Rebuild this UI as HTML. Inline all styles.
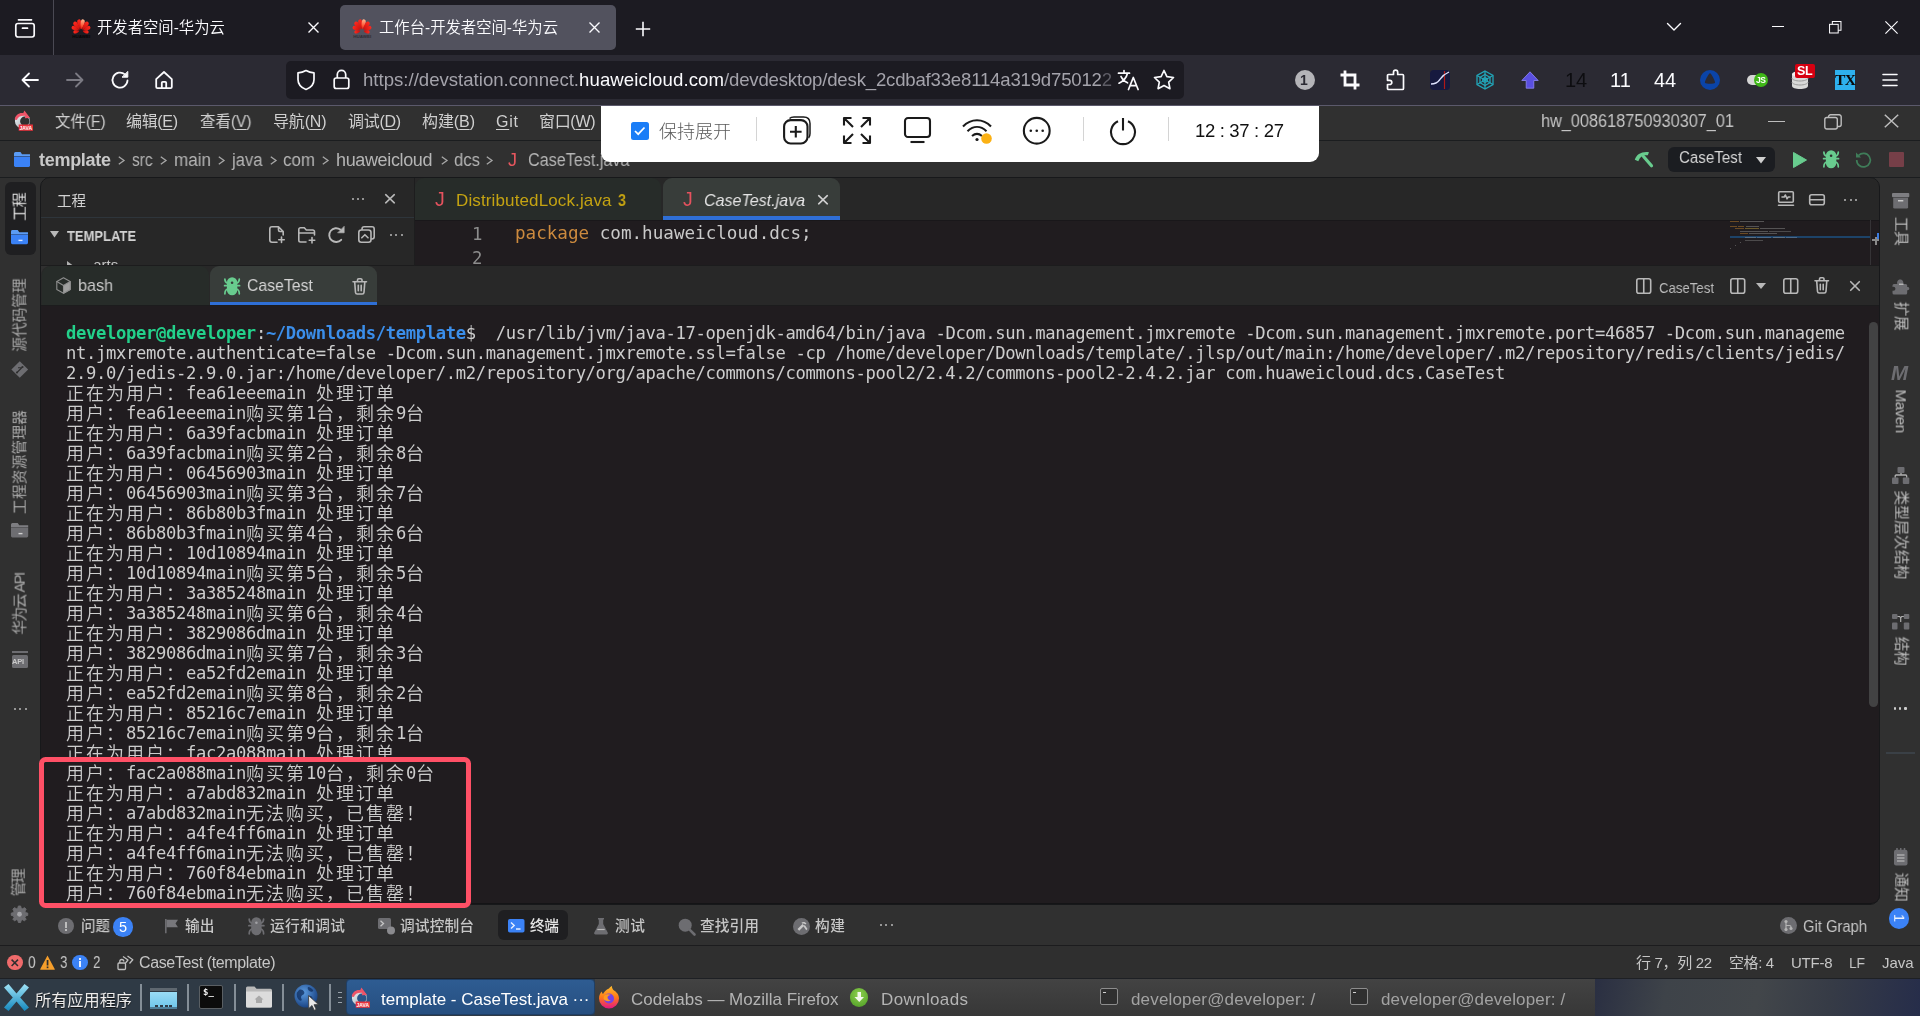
<!DOCTYPE html>
<html lang="zh-CN">
<head>
<meta charset="utf-8">
<title>工作台-开发者空间-华为云</title>
<style>
*{box-sizing:border-box;margin:0;padding:0}
html,body{width:1920px;height:1020px;overflow:hidden;background:#fff}
body{position:relative;font-family:"Liberation Sans","Noto Sans CJK SC",sans-serif;color:#d4d4d4}
.a{position:absolute}
.t{position:absolute;white-space:nowrap;line-height:1}
svg{position:absolute;overflow:visible}
#tabbar{left:0;top:0;width:1920px;height:55px;background:#1c1b22}
#navbar{left:0;top:55px;width:1920px;height:50px;background:#2b2a33}
#urlbar{left:286px;top:61px;width:898px;height:38px;background:#1c1b22;border-radius:5px}
.ftab{font-size:15.35px;color:#fbfbfe;top:20px;font-weight:350}
.term{font-family:"DejaVu Sans Mono","WenQuanYi Zen Hei Mono","WenQuanYi Zen Hei",monospace;font-size:17.2px;letter-spacing:-0.355px;line-height:20px;color:#cdcdcd;white-space:pre}
u{text-decoration:underline;text-underline-offset:2px;text-decoration-thickness:1px}
.term .w{display:inline-block;height:20px;line-height:20px;vertical-align:top;letter-spacing:2px;font-size:18px;font-family:"DejaVu Sans Mono","Noto Sans CJK SC","WenQuanYi Zen Hei",monospace;font-weight:350;position:relative;top:.6px}
.term b{font-weight:bold}
.t,.term{will-change:transform}
</style>
</head>
<body>
<!-- ======= Firefox tab bar ======= -->
<div id="tabbar" class="a"></div>
<div id="navbar" class="a"></div>
<div id="urlbar" class="a"></div>
<!-- firefox view icon -->
<svg class="a" style="left:14px;top:17px" width="22" height="22" viewBox="0 0 22 22" fill="none" stroke="#fbfbfe" stroke-width="1.7" stroke-linecap="round" stroke-linejoin="round"><path d="M4.5 2.8h13"/><rect x="1.8" y="6.5" width="18.4" height="13.5" rx="2.2"/><path d="M8.5 11.2h5"/></svg>
<div class="a" style="left:53px;top:0;width:1px;height:55px;background:#4a4953"></div>
<!-- tab 1 -->
<svg class="a" style="left:71px;top:17.5px" width="20" height="21" viewBox="0 0 20 21"><defs><linearGradient id="hwa" x1="0" y1="0" x2="0" y2="1"><stop offset="0" stop-color="#ff2a1f"/><stop offset="1" stop-color="#c8100c"/></linearGradient><linearGradient id="hpa" x1="0" y1="0" x2="0" y2="1"><stop offset="0" stop-color="#ffb892"/><stop offset=".6" stop-color="#ff5a38"/><stop offset="1" stop-color="#d8140e"/></linearGradient></defs><path transform="translate(10 13.200) rotate(-11)" d="M0 -1.8C-1.9 -5.4 -3.3 -12.2 0 -12.0C3.3 -12.2 1.9 -5.4 0 -1.8Z" fill="url(#hwa)"/><path transform="translate(10 13.200) rotate(11)" d="M0 -1.8C-1.9 -5.4 -3.3 -12.2 0 -12.0C3.3 -12.2 1.9 -5.4 0 -1.8Z" fill="url(#hpa)"/><path transform="translate(10 13.200) rotate(-37)" d="M0 -1.8C-2.0 -5.2 -3.4 -11.8 0 -11.6C3.4 -11.8 2.0 -5.2 0 -1.8Z" fill="url(#hwa)"/><path transform="translate(10 13.200) rotate(37)" d="M0 -1.8C-2.0 -5.2 -3.4 -11.8 0 -11.6C3.4 -11.8 2.0 -5.2 0 -1.8Z" fill="url(#hwa)"/><path transform="translate(10 13.200) rotate(-65)" d="M0 -1.8C-1.8 -4.7 -3.1 -10.4 0 -10.2C3.1 -10.4 1.8 -4.7 0 -1.8Z" fill="url(#hwa)"/><path transform="translate(10 13.200) rotate(65)" d="M0 -1.8C-1.8 -4.7 -3.1 -10.4 0 -10.2C3.1 -10.4 1.8 -4.7 0 -1.8Z" fill="url(#hwa)"/><path transform="translate(10 13.200) rotate(-97)" d="M0 -1.8C-1.5 -3.8 -2.6 -7.8 0 -7.6C2.6 -7.8 1.5 -3.8 0 -1.8Z" fill="url(#hwa)"/><path transform="translate(10 13.200) rotate(97)" d="M0 -1.8C-1.5 -3.8 -2.6 -7.8 0 -7.6C2.6 -7.8 1.5 -3.8 0 -1.8Z" fill="url(#hwa)"/><text x="10.200" y="19.800" text-anchor="middle" font-size="4" font-weight="bold" fill="#050505" font-family="Liberation Sans, sans-serif" textLength="18" lengthAdjust="spacingAndGlyphs">HUAWEI</text></svg>
<div class="t ftab" style="left:96.500px">开发者空间-华为云</div>
<svg class="a" style="left:307px;top:21px" width="13" height="13" viewBox="0 0 13 13" stroke="#fbfbfe" stroke-width="1.400" fill="none"><path d="M1.500 1.500l10 10M11.500 1.500l-10 10"/></svg>
<!-- tab 2 active -->
<div class="a" style="left:340px;top:5px;width:276px;height:45px;background:#52525e;border-radius:5px"></div>
<svg class="a" style="left:352px;top:17.5px" width="20" height="21" viewBox="0 0 20 21"><defs><linearGradient id="hwb" x1="0" y1="0" x2="0" y2="1"><stop offset="0" stop-color="#ff2a1f"/><stop offset="1" stop-color="#c8100c"/></linearGradient><linearGradient id="hpb" x1="0" y1="0" x2="0" y2="1"><stop offset="0" stop-color="#ffb892"/><stop offset=".6" stop-color="#ff5a38"/><stop offset="1" stop-color="#d8140e"/></linearGradient></defs><path transform="translate(10 13.200) rotate(-11)" d="M0 -1.8C-1.9 -5.4 -3.3 -12.2 0 -12.0C3.3 -12.2 1.9 -5.4 0 -1.8Z" fill="url(#hwb)"/><path transform="translate(10 13.200) rotate(11)" d="M0 -1.8C-1.9 -5.4 -3.3 -12.2 0 -12.0C3.3 -12.2 1.9 -5.4 0 -1.8Z" fill="url(#hpb)"/><path transform="translate(10 13.200) rotate(-37)" d="M0 -1.8C-2.0 -5.2 -3.4 -11.8 0 -11.6C3.4 -11.8 2.0 -5.2 0 -1.8Z" fill="url(#hwb)"/><path transform="translate(10 13.200) rotate(37)" d="M0 -1.8C-2.0 -5.2 -3.4 -11.8 0 -11.6C3.4 -11.8 2.0 -5.2 0 -1.8Z" fill="url(#hwb)"/><path transform="translate(10 13.200) rotate(-65)" d="M0 -1.8C-1.8 -4.7 -3.1 -10.4 0 -10.2C3.1 -10.4 1.8 -4.7 0 -1.8Z" fill="url(#hwb)"/><path transform="translate(10 13.200) rotate(65)" d="M0 -1.8C-1.8 -4.7 -3.1 -10.4 0 -10.2C3.1 -10.4 1.8 -4.7 0 -1.8Z" fill="url(#hwb)"/><path transform="translate(10 13.200) rotate(-97)" d="M0 -1.8C-1.5 -3.8 -2.6 -7.8 0 -7.6C2.6 -7.8 1.5 -3.8 0 -1.8Z" fill="url(#hwb)"/><path transform="translate(10 13.200) rotate(97)" d="M0 -1.8C-1.5 -3.8 -2.6 -7.8 0 -7.6C2.6 -7.8 1.5 -3.8 0 -1.8Z" fill="url(#hwb)"/><text x="10.200" y="19.800" text-anchor="middle" font-size="4" font-weight="bold" fill="#2e2d36" font-family="Liberation Sans, sans-serif" textLength="18" lengthAdjust="spacingAndGlyphs">HUAWEI</text></svg>
<div class="t ftab" style="left:378.500px">工作台-开发者空间-华为云</div>
<svg class="a" style="left:588px;top:21px" width="13" height="13" viewBox="0 0 13 13" stroke="#fbfbfe" stroke-width="1.400" fill="none"><path d="M1.500 1.500l10 10M11.500 1.500l-10 10"/></svg>
<!-- new tab -->
<svg class="a" style="left:635px;top:21px" width="16" height="16" viewBox="0 0 16 16" stroke="#fbfbfe" stroke-width="1.600" fill="none"><path d="M8 .8v14.400M.8 8h14.400"/></svg>
<!-- window controls -->
<svg class="a" style="left:1666px;top:22px" width="16" height="10" viewBox="0 0 16 10" stroke="#fbfbfe" stroke-width="1.400" fill="none" stroke-linecap="round" stroke-linejoin="round"><path d="M1.500 1.500L8 8l6.500-6.500"/></svg>
<div class="a" style="left:1772px;top:26px;width:12px;height:1px;background:#fbfbfe"></div>
<svg class="a" style="left:1828.700px;top:20.800px" width="13" height="13" viewBox="0 0 14 14" stroke="#fbfbfe" stroke-width="1.100" fill="none"><rect x=".6" y="3.600" width="9.300" height="9.300"/><path d="M3.600 3.600V.6h9.300v9.300h-3"/></svg>
<svg class="a" style="left:1885px;top:21px" width="13" height="13" viewBox="0 0 13 13" stroke="#fbfbfe" stroke-width="1.150" fill="none"><path d="M.4.400l12.200 12.200M12.600.4L.4 12.600"/></svg>

<!-- nav buttons -->
<svg class="a" style="left:21px;top:71px" width="18" height="18" viewBox="0 0 18 18" stroke="#fbfbfe" stroke-width="1.800" fill="none" stroke-linecap="round" stroke-linejoin="round"><path d="M17 9H1.500M8 2.500L1.500 9 8 15.500"/></svg>
<svg class="a" style="left:66px;top:71px" width="18" height="18" viewBox="0 0 18 18" stroke="#7b7a83" stroke-width="1.800" fill="none" stroke-linecap="round" stroke-linejoin="round"><path d="M1 9h15.500M10 2.500L16.500 9 10 15.500"/></svg>
<svg class="a" style="left:110px;top:70px" width="20" height="20" viewBox="0 0 20 20" stroke="#fbfbfe" stroke-width="1.800" fill="none" stroke-linecap="round" stroke-linejoin="round"><path d="M17.500 10.500a7.500 7.500 0 1 1-2.600-6.100"/><path d="M17.800 1.800v5.400h-5.400z" fill="#fbfbfe" stroke-width="1"/></svg>
<svg class="a" style="left:154px;top:70px" width="20" height="20" viewBox="0 0 20 20" stroke="#fbfbfe" stroke-width="1.800" fill="none" stroke-linecap="round" stroke-linejoin="round"><path d="M2.200 9.200L10 2l7.800 7.200V17a1.200 1.200 0 0 1-1.200 1.200H3.400A1.200 1.200 0 0 1 2.200 17z"/><path d="M7.800 18v-5.200a1 1 0 0 1 1-1h2.400a1 1 0 0 1 1 1V18"/></svg>
<!-- url bar content -->
<svg class="a" style="left:296px;top:69px" width="20" height="22" viewBox="0 0 20 22" stroke="#fbfbfe" stroke-width="1.700" fill="none" stroke-linejoin="round"><path d="M10 1.500c2.600 1.500 5.200 2.200 8 2.400v6.600c0 5-3.500 8.300-8 10-4.500-1.700-8-5-8-10V3.900c2.800-.2 5.400-.9 8-2.400z"/></svg>
<svg class="a" style="left:333px;top:69px" width="17" height="21" viewBox="0 0 17 21" stroke="#fbfbfe" stroke-width="1.700" fill="none" stroke-linejoin="round"><rect x="1.200" y="9" width="14.600" height="10.500" rx="2"/><path d="M4.300 9V5.600a4.200 4.200 0 0 1 8.400 0V9"/></svg>
<div class="t" id="url" style="left:363px;top:71px;font-size:18.6px;color:#a4a3ab"><span style="letter-spacing:0px">https://devstation.connect.</span><span style="color:#fbfbfe;letter-spacing:.09px">huaweicloud.com</span><span style="letter-spacing:-.19px">/devdesktop/desk_2cdbaf33e8114a319d75012<span style="color:#5e5d66">2</span></span></div>


<!-- translate + star -->
<svg class="a" style="left:1117px;top:69px" width="23" height="22" viewBox="0 0 23 22" fill="none" stroke="#fbfbfe" stroke-width="1.700" stroke-linecap="round" stroke-linejoin="round"><path d="M1.500 4.200h11M7 1.500v2.700M10.500 4.200C9.500 8.500 6.500 12 2 14.200M4 7.500c1.200 2.800 3.500 5 6.500 6.300"/><path d="M11.500 20.500L16.300 8.500l4.800 12M13.200 16.700h6.200"/></svg>
<svg class="a" style="left:1153px;top:69px" width="22" height="21" viewBox="0 0 22 21" fill="none" stroke="#fbfbfe" stroke-width="1.700" stroke-linejoin="round"><path d="M11 1.500l2.900 6.100 6.600.9-4.800 4.600 1.200 6.600L11 16.500l-5.900 3.200 1.200-6.600L1.500 8.500l6.600-.9z"/></svg>
<!-- extension icons -->
<div class="a" style="left:1295px;top:70px;width:20px;height:20px;border-radius:50%;background:#b4b4b8"></div>
<div class="t" style="left:1300px;top:73px;font-size:14px;font-weight:bold;color:#2b2a33">1</div>
<svg class="a" style="left:1340px;top:70px" width="20" height="20" viewBox="0 0 20 20" fill="none" stroke="#fbfbfe" stroke-width="2.800"><path d="M5 .5v14.500h14.500M.5 5h14.500v14.500"/></svg>
<svg class="a" style="left:1386px;top:69px" width="20" height="22" viewBox="0 0 20 22" fill="none" stroke="#fbfbfe" stroke-width="1.700" stroke-linejoin="round"><path d="M7.500 5.500V3.300a2.100 2.100 0 0 1 4.200 0v2.200h4.800a1 1 0 0 1 1 1v13a1 1 0 0 1-1 1H2.500a1 1 0 0 1-1-1v-4h2.200a2.100 2.100 0 0 0 0-4.200H1.500v-4.800a1 1 0 0 1 1-1z"/></svg>
<div class="a" style="left:1430px;top:70px;width:20px;height:20px;border-radius:4px;background:#16193f"></div>
<svg class="a" style="left:1430px;top:70px" width="20" height="20" viewBox="0 0 20 20" fill="none"><path d="M14.500 1v18" stroke="#b01818" stroke-width="1.200"/><path d="M1 14c4 0 6-.5 8.500-4S13 4.500 19 2" stroke="#dfe3ff" stroke-width="1.300"/></svg>
<svg class="a" style="left:1475px;top:70px" width="20" height="20" viewBox="0 0 20 20" fill="none" stroke="#22a5b8" stroke-width="1.300"><path d="M10 1l8 4.500v9L10 19l-8-4.500v-9z"/><path d="M10 4.500l5 2.800v5.400l-5 2.800-5-2.800V7.300z"/><path d="M10 7.500l2.300 1.300v2.400L10 12.500l-2.300-1.300V8.800zM10 1v18M2 5.500l16 9M18 5.500l-16 9"/></svg>
<svg class="a" style="left:1521px;top:71px" width="18" height="18" viewBox="0 0 18 18"><path d="M9 .8l8.200 8.700h-4.400v7.700H5.200V9.500H.8z" fill="#5a4fe0" stroke="#8f88f5" stroke-width=".8"/></svg>
<div class="t" style="left:1565px;top:70px;font-size:20px;color:#0d0d10">14</div>
<div class="t" style="left:1610px;top:70px;font-size:20px;color:#fbfbfe">11</div>
<div class="t" style="left:1654px;top:70px;font-size:20px;color:#fbfbfe">44</div>
<div class="a" style="left:1700px;top:70px;width:20px;height:20px;border-radius:50%;background:#0b44a8"></div>
<svg class="a" style="left:1700px;top:70px" width="20" height="20" viewBox="0 0 20 20"><path d="M10 3.200c1.200 0 5.600 8.300 5 9.600-.7 1.400-9.300 1.400-10 0-.6-1.300 3.800-9.600 5-9.600z" fill="#2b2a33"/></svg>
<div class="a" style="left:1747px;top:75px;width:20px;height:10px;border-radius:5px;background:#d6d6d6"></div>
<div class="a" style="left:1754px;top:73px;width:14px;height:14px;border-radius:50%;background:#3fb618"></div>
<div class="t" style="left:1756px;top:76px;font-size:8.500px;font-weight:bold;color:#fff;letter-spacing:-0.500px">JS</div>
<svg class="a" style="left:1791px;top:70px" width="18" height="20" viewBox="0 0 18 20"><path d="M1 4v12c0 1.700 3.600 3 8 3s8-1.300 8-3V4z" fill="#d9d9d9"/><ellipse cx="9" cy="4" rx="8" ry="3" fill="#f2f2f2"/><path d="M1 8c0 1.700 3.600 3 8 3s8-1.300 8-3M1 12c0 1.700 3.600 3 8 3s8-1.300 8-3" fill="none" stroke="#9a9a9a" stroke-width="1"/></svg>
<div class="a" style="left:1795px;top:64px;width:20px;height:14px;border-radius:2px;background:#d70011"></div>
<div class="t" style="left:1797px;top:65px;font-size:12.500px;font-weight:bold;color:#fff;letter-spacing:-0.300px">SL</div>
<div class="a" style="left:1835px;top:70px;width:20px;height:20px;background:#2eb1ee"></div>
<div class="t" style="left:1835px;top:72px;font-size:15.500px;font-weight:bold;color:#0a0a0a;font-family:'Liberation Serif',serif;letter-spacing:-0.500px">TX</div>
<svg class="a" style="left:1882px;top:73px" width="16" height="14" viewBox="0 0 16 14" stroke="#fbfbfe" stroke-width="1.600" stroke-linecap="round"><path d="M1 1.500h14M1 7h14M1 12.500h14"/></svg>



<!-- ======= p_idetop ======= -->
<div class="a" style="left:0px;top:105px;width:1920px;height:873px;background:#303030;"></div>
<div class="a" style="left:0px;top:105px;width:1920px;height:1px;background:#5b596b;"></div>
<div class="a" style="left:0px;top:139.5px;width:1920px;height:1.5px;background:#1b1d1f;"></div>
<div class="a" style="left:0px;top:176.5px;width:1920px;height:1.5px;background:#1b1d1f;"></div>
<svg class="a" style="left:13px;top:109px" width="22" height="23" viewBox="0 0 22 23"><defs><linearGradient id="lga" x1="0" y1="0" x2="1" y2="1"><stop offset="0" stop-color="#f2f5f7"/><stop offset="1" stop-color="#9aa6b0"/></linearGradient></defs><path fill-rule="evenodd" fill="url(#lga)" d="M9.500 4.400a7.600 7.600 0 1 0 0 15.200a7.600 7.600 0 1 0 0-15.200zM11.800 7.600a4.700 4.700 0 1 1 0 9.400a4.700 4.700 0 1 1 0-9.400z"/><path fill="#ee5468" d="M1.700 10.500C2.300 6.300 6 3.600 10.200 4.200l1.200-2.700 5.700 7.400-5.300.4.600-2.400C8.300 6.200 4.800 7.800 3.900 11z"/><rect x="5.700" y="15.500" width="14.200" height="6.300" fill="#e8323c"/><text x="12.800" y="20.600" font-size="5" font-weight="bold" fill="#fff" text-anchor="middle" font-family="Liberation Sans,sans-serif">JAVA</text></svg>
<div class="t" style="left:54.50px;top:114.36px;font-size:16px;color:#cfcfcf;transform:scaleX(0.9631);transform-origin:0 50%;">文件(<u>F</u>)</div>
<div class="t" style="left:126.00px;top:114.36px;font-size:16px;color:#cfcfcf;letter-spacing:-0.336px;">编辑(<u>E</u>)</div>
<div class="t" style="left:199.50px;top:114.36px;font-size:16px;color:#cfcfcf;transform:scaleX(0.9654);transform-origin:0 50%;">查看(<u>V</u>)</div>
<div class="t" style="left:272.50px;top:114.36px;font-size:16px;color:#cfcfcf;letter-spacing:-0.180px;">导航(<u>N</u>)</div>
<div class="t" style="left:348.00px;top:114.36px;font-size:16px;color:#cfcfcf;letter-spacing:-0.305px;">调试(<u>D</u>)</div>
<div class="t" style="left:422.00px;top:114.36px;font-size:16px;color:#cfcfcf;letter-spacing:-0.086px;">构建(<u>B</u>)</div>
<div class="t" style="left:496.00px;top:114.36px;font-size:16px;color:#cfcfcf;letter-spacing:0.773px;"><u>G</u>it</div>
<div class="t" style="left:539.00px;top:114.36px;font-size:16px;color:#cfcfcf;letter-spacing:-0.316px;">窗口(<u>W</u>)</div>
<div class="t" style="left:1541.00px;top:113.09px;font-size:17.5px;color:#c4c4c4;transform:scaleX(0.9310);transform-origin:0 50%;">hw_008618750930307_01</div>
<div class="a" style="left:1767.5px;top:120.5px;width:17px;height:1.5px;background:#bdbdbd;"></div>
<svg class="a" style="left:1824px;top:113.5px" width="18" height="16" viewBox="0 0 18 16" fill="none" stroke="#bdbdbd" stroke-width="1.400"><rect x=".8" y="3.500" width="12.500" height="11.500" rx="2"/><path d="M4.500 3.300V2.800a2 2 0 0 1 2-2h8.700a2 2 0 0 1 2 2v7.700a2 2 0 0 1-2 2h-1.700"/></svg>
<svg class="a" style="left:1884px;top:114px" width="15" height="14" viewBox="0 0 15 14" fill="none" stroke="#bdbdbd" stroke-width="1.500"><path d="M.8.800l13.400 12.400M14.200.8L.8 13.200"/></svg>
<svg class="a" style="left:14px;top:152px" width="16" height="15" viewBox="0 0 16 15" ><path d="M0 1.500A1.500 1.500 0 0 1 1.500 0h5l1.500 2.200H16V4H0z" fill="#5b9cf5"/><path d="M0 4.600h16v9A1.400 1.400 0 0 1 14.600 15H1.400A1.400 1.400 0 0 1 0 13.600z" fill="#3b82f6"/></svg>
<div class="t" style="left:39.00px;top:150.86px;font-size:18px;color:#c8c8c8;letter-spacing:-0.290px;font-weight:bold;">template</div>
<div class="t" style="left:132.00px;top:150.86px;font-size:18px;color:#b5b5b5;transform:scaleX(0.8542);transform-origin:0 50%;">src</div>
<div class="t" style="left:174.00px;top:150.86px;font-size:18px;color:#b5b5b5;transform:scaleX(0.9483);transform-origin:0 50%;">main</div>
<div class="t" style="left:232.00px;top:150.86px;font-size:18px;color:#b5b5b5;transform:scaleX(0.9234);transform-origin:0 50%;">java</div>
<div class="t" style="left:283.00px;top:150.86px;font-size:18px;color:#b5b5b5;transform:scaleX(0.9407);transform-origin:0 50%;">com</div>
<div class="t" style="left:336.00px;top:150.86px;font-size:18px;color:#b5b5b5;letter-spacing:-0.358px;">huaweicloud</div>
<div class="t" style="left:454.00px;top:150.86px;font-size:18px;color:#b5b5b5;transform:scaleX(0.9281);transform-origin:0 50%;">dcs</div>
<svg class="a" style="left:117.5px;top:155.5px" width="7" height="9" viewBox="0 0 7 9" fill="none" stroke="#a8a8a8" stroke-width="1.300"><path d="M.8.800L6 4.500.8 8.200"/></svg>
<svg class="a" style="left:160px;top:155.5px" width="7" height="9" viewBox="0 0 7 9" fill="none" stroke="#a8a8a8" stroke-width="1.300"><path d="M.8.800L6 4.500.8 8.200"/></svg>
<svg class="a" style="left:218px;top:155.5px" width="7" height="9" viewBox="0 0 7 9" fill="none" stroke="#a8a8a8" stroke-width="1.300"><path d="M.8.800L6 4.500.8 8.200"/></svg>
<svg class="a" style="left:270px;top:155.5px" width="7" height="9" viewBox="0 0 7 9" fill="none" stroke="#a8a8a8" stroke-width="1.300"><path d="M.8.800L6 4.500.8 8.200"/></svg>
<svg class="a" style="left:322px;top:155.5px" width="7" height="9" viewBox="0 0 7 9" fill="none" stroke="#a8a8a8" stroke-width="1.300"><path d="M.8.800L6 4.500.8 8.200"/></svg>
<svg class="a" style="left:441px;top:155.5px" width="7" height="9" viewBox="0 0 7 9" fill="none" stroke="#a8a8a8" stroke-width="1.300"><path d="M.8.800L6 4.500.8 8.200"/></svg>
<svg class="a" style="left:485.5px;top:155.5px" width="7" height="9" viewBox="0 0 7 9" fill="none" stroke="#a8a8a8" stroke-width="1.300"><path d="M.8.800L6 4.500.8 8.200"/></svg>
<div class="t" style="left:507.50px;top:150.86px;font-size:18px;color:#e5565e;letter-spacing:0.500px;">J</div>
<div class="t" style="left:527.50px;top:150.86px;font-size:18px;color:#b5b5b5;transform:scaleX(0.8977);transform-origin:0 50%;">CaseTest.java</div>
<svg class="a" style="left:1634px;top:150.5px" width="20" height="17" viewBox="0 0 20 17" ><path d="M9.500 5.500L17.500 14.800" stroke="#68cc8e" stroke-width="3.200" stroke-linecap="round" fill="none"/><path d="M.8 8.800C2.500 3.200 8 .3 15 1.300l-1.200 3C9.500 3.600 6.300 5.200 4.300 10.300z" fill="#68cc8e"/></svg>
<div class="a" style="left:1667.7px;top:147px;width:107px;height:24.5px;background:#1b1d21;border-radius:6px"></div>
<div class="t" style="left:1679.00px;top:150.26px;font-size:16.7px;color:#d6d6d6;transform:scaleX(0.9057);transform-origin:0 50%;">CaseTest</div>
<svg class="a" style="left:1755.5px;top:156.5px" width="10" height="6.5" viewBox="0 0 10 6.5" fill="#cfcfcf"><path d="M0 0h10L5 6.500z"/></svg>
<svg class="a" style="left:1793px;top:152px" width="14" height="16" viewBox="0 0 14 16" fill="#68cc8e" stroke="#68cc8e" stroke-linejoin="round" stroke-width="1"><path d="M.5.500L13.500 8 .5 15.500z"/></svg>
<svg class="a" style="left:1823px;top:150px" width="16.2" height="18.5" viewBox="0 0 16.200 18.500"><rect x="2.900" y=".200" width="10.400" height="18.100" rx="5.200" fill="#68cc8e"/><path d="M3.600 6.200C1.600 5.400 .9 3.900.9 2.200M12.600 6.200c2-.8 2.700-2.300 2.700-4M.6 8.700h3M12.600 8.700h3M3.600 12C1.600 12.600.9 14.500.9 16.800M12.600 12c2 .6 2.700 2.500 2.700 4.800" stroke="#68cc8e" stroke-width="1.700" stroke-linecap="round" fill="none"/><circle cx="8.100" cy="5.700" r="1.300" fill="#303030"/></svg>
<svg class="a" style="left:1855px;top:151px" width="17" height="17" viewBox="0 0 17 17" ><path d="M3.500 4.500A6.800 6.800 0 1 1 1.700 9" fill="none" stroke="#3f7d59" stroke-width="1.700"/><path d="M1 1.500v5h5z" fill="#3f7d59"/></svg>
<div class="a" style="left:1889px;top:152px;width:15px;height:15px;background:#763f48;border-radius:1px"></div>
<div class="a" style="left:601px;top:106px;width:718px;height:55.5px;background:#ffffff;border-radius:0 0 9px 9px"></div>
<div class="a" style="left:631px;top:122px;width:17.5px;height:17.5px;background:#1a7df7;border-radius:2.500px"></div>
<svg class="a" style="left:631px;top:122px" width="17.5" height="17.5" viewBox="0 0 17.5 17.5" fill="none" stroke="#fff" stroke-width="1.700"><path d="M4 9l3.200 3.200L13.500 5.500"/></svg>
<div class="t" style="left:659.00px;top:123.16px;font-size:18px;color:#5a5a5a;letter-spacing:0.000px;font-weight:300;">保持展开</div>
<div class="a" style="left:755.5px;top:117px;width:1px;height:24px;background:#d4d4d4;"></div>
<div class="a" style="left:1082.5px;top:117px;width:1px;height:24px;background:#d4d4d4;"></div>
<div class="a" style="left:1168px;top:117px;width:1px;height:24px;background:#d4d4d4;"></div>
<svg class="a" style="left:782.5px;top:116px" width="28" height="28" viewBox="0 0 28 28" stroke="#1a1a1a" stroke-width="2.100" fill="none" stroke-linecap="butt" stroke-linejoin="round"><path d="M6.500 2.500C7.500 1.500 9 1 11 1h9.500c4 0 6.500 2.500 6.500 6.500v10c0 2-.4 3.400-1.400 4.400" stroke-width="1.500"/><rect x="1.100" y="4.100" width="23.400" height="23.400" rx="6.500"/><path d="M12.800 10v11.600M7 15.800h11.600"/></svg>
<svg class="a" style="left:843px;top:117px" width="28" height="27" viewBox="0 0 28 27" stroke="#1a1a1a" stroke-width="2.100" fill="none" stroke-linecap="butt" stroke-linejoin="round"><path d="M1 8.500V1h7.500M1 1l9 9M19.500 1H27v7.500M27 1l-9 9M1 18.500V26h7.500M1 26l9-9M27 18.500V26h-7.500M27 26l-9-9"/></svg>
<svg class="a" style="left:904px;top:117px" width="27" height="26" viewBox="0 0 27 26" stroke="#1a1a1a" stroke-width="2.100" fill="none" stroke-linecap="butt" stroke-linejoin="round"><rect x="1" y="1" width="25" height="19" rx="3"/><path d="M6.500 25h14"/></svg>
<svg class="a" style="left:962px;top:119px" width="30" height="24" viewBox="0 0 30 24" stroke="#1a1a1a" stroke-width="2.100" fill="none" stroke-linecap="butt" stroke-linejoin="round"><path d="M1 7.500C9 -.8 21 -.8 29 7.500M5.500 12.200c6-5.600 13-5.600 19 0M10 17c3.500-3 6.500-3 10 0"/><circle cx="15" cy="20.500" r="1.600" fill="#1a1a1a" stroke="none"/></svg>
<svg class="a" style="left:980.5px;top:133px" width="11" height="11" viewBox="0 0 11 11" ><circle cx="5.500" cy="5.500" r="5.300" fill="#fbb114"/></svg>
<svg class="a" style="left:1023px;top:116.5px" width="27.5" height="27.5" viewBox="0 0 27.5 27.5" stroke="#1a1a1a" stroke-width="2.100" fill="none" stroke-linecap="butt" stroke-linejoin="round"><circle cx="13.750" cy="13.750" r="12.900"/><circle cx="7.800" cy="13.750" r="1.300" fill="#1a1a1a" stroke="none"/><circle cx="13.750" cy="13.750" r="1.300" fill="#1a1a1a" stroke="none"/><circle cx="19.700" cy="13.750" r="1.300" fill="#1a1a1a" stroke="none"/></svg>
<svg class="a" style="left:1110px;top:117px" width="26" height="27" viewBox="0 0 26 27" stroke="#1a1a1a" stroke-width="2.100" fill="none" stroke-linecap="butt" stroke-linejoin="round"><path d="M13 1v12.500"/><path d="M8 4.200A12 12 0 1 0 18 4.200"/></svg>
<div class="t" style="left:1195.00px;top:122.24px;font-size:18.5px;color:#111111;letter-spacing:-0.325px;">12 : 37 : 27</div>

<!-- ======= p_panels ======= -->
<div class="a" style="left:41px;top:178px;width:373px;height:88px;background:#272727;border-radius:9px 0 0 0"></div>
<div class="a" style="left:41px;top:216.8px;width:373px;height:1.2px;background:#2e353b;"></div>
<div class="t" style="left:57.00px;top:194.13px;font-size:14.5px;color:#d2d2d2;transform:scaleX(0.9828);transform-origin:0 50%;">工程</div>
<div class="a" style="left:351.5px;top:197.5px;width:2px;height:2px;background:#b8b8b8;border-radius:1px"></div>
<div class="a" style="left:356.5px;top:197.5px;width:2px;height:2px;background:#b8b8b8;border-radius:1px"></div>
<div class="a" style="left:361.5px;top:197.5px;width:2px;height:2px;background:#b8b8b8;border-radius:1px"></div>
<svg class="a" style="left:385px;top:194px" width="10" height="9.5" viewBox="0 0 10 9.5" stroke="#b8b8b8" stroke-width="1.600" fill="none" stroke-linecap="round" stroke-linejoin="round"><path d="M.7.700l8.600 8.100M9.300.7L.7 8.800"/></svg>
<svg class="a" style="left:49.5px;top:231px" width="9" height="6.5" viewBox="0 0 9 6.5" fill="#b8b8b8"><path d="M0 0h9L4.500 6.500z"/></svg>
<div class="t" style="left:67.00px;top:228.63px;font-size:14.5px;color:#d2d2d2;transform:scaleX(0.8954);transform-origin:0 50%;font-weight:bold;">TEMPLATE</div>
<svg class="a" style="left:269px;top:226px" width="16" height="17" viewBox="0 0 16 17" stroke="#b8b8b8" stroke-width="1.600" fill="none" stroke-linecap="round" stroke-linejoin="round"><path d="M9.500 .8H3A2.200 2.200 0 0 0 .8 3v11A2.200 2.200 0 0 0 3 16.200h5M9.500.8L14.200 5.500V9M9.500.8v3.200a1.500 1.500 0 0 0 1.500 1.500h3.200M12.500 11v5.500M9.750 13.750h5.500"/></svg>
<svg class="a" style="left:297.5px;top:227px" width="18" height="16" viewBox="0 0 18 16" stroke="#b8b8b8" stroke-width="1.600" fill="none" stroke-linecap="round" stroke-linejoin="round"><path d="M8 15H2.500A1.700 1.700 0 0 1 .8 13.300V2.500A1.700 1.700 0 0 1 2.500.8h3.800l2 2.200h6.500a1.700 1.700 0 0 1 1.700 1.700V8M.8 6h15.700M14 10.500v5.500M11.250 13.250h5.500"/></svg>
<svg class="a" style="left:327.5px;top:226px" width="17" height="17" viewBox="0 0 17 17" stroke="#b8b8b8" stroke-width="1.600" fill="none" stroke-linecap="round" stroke-linejoin="round"><path d="M12.300 3.600A6.900 6.900 0 1 0 13.200 13.800" stroke-width="1.900"/><path d="M16.200 .6v6.200h-6.200z" fill="#b8b8b8" stroke-width=".6"/></svg>
<svg class="a" style="left:357.5px;top:226px" width="17" height="17" viewBox="0 0 17 17" stroke="#b8b8b8" stroke-width="1.600" fill="none" stroke-linecap="round" stroke-linejoin="round"><rect x=".8" y="4" width="12.200" height="12.200" rx="2.500"/><path d="M4 3.500V3A2.200 2.200 0 0 1 6.200.8H14A2.200 2.200 0 0 1 16.200 3v7.800a2.200 2.200 0 0 1-2.200 2.200h-.5M3.800 11.800l3.100-3.100 3.100 3.100"/></svg>
<div class="a" style="left:389.5px;top:233.5px;width:2px;height:2px;background:#b8b8b8;border-radius:1px"></div>
<div class="a" style="left:395px;top:233.5px;width:2px;height:2px;background:#b8b8b8;border-radius:1px"></div>
<div class="a" style="left:400.5px;top:233.5px;width:2px;height:2px;background:#b8b8b8;border-radius:1px"></div>
<div class="a" style="left:41px;top:258px;width:373px;height:7.500px;overflow:hidden"><svg class="a" style="left:26px;top:3px" width="6" height="9" viewBox="0 0 6 9" fill="#b0b0b0"><path d="M0 0l6 4.500L0 9z"/></svg><div class="t" style="left:48px;top:-1.500px;font-size:15px;color:#c4c4c4">.arts</div></div>
<div class="a" style="left:41px;top:265px;width:373px;height:1px;background:#1c1c1d;"></div>
<div class="a" style="left:415px;top:178px;width:1464px;height:42px;background:#272727;border-radius:0 9px 0 0"></div>
<div class="a" style="left:414px;top:178px;width:1px;height:88px;background:#1d1d1e;"></div>
<div class="a" style="left:415px;top:178px;width:245.5px;height:42px;background:#272c29;border-radius:9px 9px 0 0"></div>
<div class="a" style="left:662.5px;top:178px;width:177.5px;height:42px;background:#383d3a;border-radius:9px 9px 0 0"></div>
<div class="a" style="left:662.5px;top:215.5px;width:177.5px;height:4px;background:#2f6fd6;"></div>
<div class="a" style="left:415px;top:219.5px;width:1464px;height:45.5px;background:#201c1f;"></div>
<div class="a" style="left:415px;top:219.5px;width:1465px;height:1px;background:#19171a;"></div>
<div class="a" style="left:415px;top:265px;width:1465px;height:1px;background:#1c1c1d;"></div>
<div class="t" style="left:435.00px;top:189.89px;font-size:19.5px;color:#e5525e;letter-spacing:-0.250px;">J</div>
<div class="t" style="left:455.50px;top:192.01px;font-size:17px;color:#c4a312;letter-spacing:0.127px;">DistributedLock.java</div>
<div class="t" style="left:617.50px;top:192.10px;font-size:16.3px;color:#c4a312;transform:scaleX(0.8828);transform-origin:0 50%;font-weight:bold;">3</div>
<div class="t" style="left:682.50px;top:189.89px;font-size:19.5px;color:#e5525e;letter-spacing:-0.250px;">J</div>
<div class="t" style="left:704.00px;top:192.01px;font-size:17px;color:#e4e4e4;transform:scaleX(0.9430);transform-origin:0 50%;font-style:italic;">CaseTest.java</div>
<svg class="a" style="left:818px;top:195px" width="10" height="9.5" viewBox="0 0 10 9.5" stroke="#d0d0d0" stroke-width="1.600" fill="none" stroke-linecap="round" stroke-linejoin="round"><path d="M.7.700l8.600 8.100M9.300.7L.7 8.800"/></svg>
<div class="t" style="left:472.00px;top:226.46px;font-size:17.3px;color:#8c8c8c;font-family:'DejaVu Sans Mono','Liberation Mono',monospace;">1</div>
<div class="t" style="left:472.00px;top:249.76px;font-size:17.3px;color:#8c8c8c;font-family:'DejaVu Sans Mono','Liberation Mono',monospace;">2</div>
<div class="a" style="left:415px;top:219.500px;width:1465px;height:45.500px;overflow:hidden"></div>
<div class="t" style="left:514.80px;top:225.21px;font-size:17.6px;color:#c9c9c9;font-family:'DejaVu Sans Mono','Liberation Mono',monospace;"><span style="color:#cc8a3e">package</span> com.huaweicloud.dcs;</div>
<svg class="a" style="left:1777.5px;top:191px" width="16" height="15" viewBox="0 0 16 15" stroke="#b8b8b8" stroke-width="1.600" fill="none" stroke-linecap="round" stroke-linejoin="round"><rect x=".7" y=".700" width="14.600" height="10.600" rx="1"/><path d="M.5 14.200h15M4 6h2.200l1.200-2 1.600 3.800 1.200-1.800H12"/></svg>
<svg class="a" style="left:1809px;top:194px" width="16" height="11.5" viewBox="0 0 16 11.5" stroke="#b8b8b8" stroke-width="1.600" fill="none" stroke-linecap="round" stroke-linejoin="round"><rect x=".7" y=".700" width="14.600" height="10.100" rx="2"/><path d="M.7 5.750h14.600"/></svg>
<div class="a" style="left:1844px;top:199px;width:2px;height:2px;background:#b8b8b8;border-radius:1px"></div>
<div class="a" style="left:1849.5px;top:199px;width:2px;height:2px;background:#b8b8b8;border-radius:1px"></div>
<div class="a" style="left:1855px;top:199px;width:2px;height:2px;background:#b8b8b8;border-radius:1px"></div>
<div class="a" style="left:1729.6px;top:236.2px;width:140.5px;height:2px;background:#1d4369;"></div>
<div class="a" style="left:1729.6px;top:221px;width:9px;height:1.2px;background:#b87a2a;opacity:.5"></div>
<div class="a" style="left:1740px;top:221px;width:24px;height:1.2px;background:#8a8a8a;opacity:.5"></div>
<div class="a" style="left:1729.6px;top:225.5px;width:7px;height:1.2px;background:#b87a2a;opacity:.5"></div>
<div class="a" style="left:1738px;top:225.5px;width:6px;height:1.2px;background:#b87a2a;opacity:.5"></div>
<div class="a" style="left:1745.5px;top:225.5px;width:13px;height:1.2px;background:#8a8a8a;opacity:.5"></div>
<div class="a" style="left:1734.5px;top:228px;width:9px;height:1.2px;background:#b87a2a;opacity:.5"></div>
<div class="a" style="left:1744.5px;top:228px;width:14px;height:1.2px;background:#b89a3a;opacity:.5"></div>
<div class="a" style="left:1760px;top:228px;width:25px;height:1.2px;background:#8a8a8a;opacity:.5"></div>
<div class="a" style="left:1739.5px;top:230.5px;width:28px;height:1.2px;background:#8a8a8a;opacity:.5"></div>
<div class="a" style="left:1769px;top:230.5px;width:22px;height:1.2px;background:#777;opacity:.5"></div>
<div class="a" style="left:1739.5px;top:233px;width:8px;height:1.2px;background:#b87a2a;opacity:.5"></div>
<div class="a" style="left:1748.5px;top:233px;width:28px;height:1.2px;background:#8a8a8a;opacity:.5"></div>
<div class="a" style="left:1744.5px;top:236.5px;width:11px;height:1.2px;background:#9a9a9a;opacity:.5"></div>
<div class="a" style="left:1757px;top:236.5px;width:14px;height:1.2px;background:#7b8fa8;opacity:.5"></div>
<div class="a" style="left:1773px;top:236.5px;width:12px;height:1.2px;background:#9a9a9a;opacity:.5"></div>
<div class="a" style="left:1786px;top:236.5px;width:11px;height:1.2px;background:#7b8fa8;opacity:.5"></div>
<div class="a" style="left:1744.5px;top:239.5px;width:18px;height:1.2px;background:#777;opacity:.5"></div>
<div class="a" style="left:1739.5px;top:242px;width:1.5px;height:1.2px;background:#888;opacity:.5"></div>
<div class="a" style="left:1734.5px;top:245px;width:1.5px;height:1.2px;background:#888;opacity:.5"></div>
<div class="a" style="left:1729.6px;top:247.5px;width:1.5px;height:1.2px;background:#888;opacity:.5"></div>
<div class="a" style="left:1870px;top:220px;width:1px;height:45px;background:#353336;"></div>
<div class="a" style="left:1877px;top:233px;width:2.5px;height:5.5px;background:#3b7be0;"></div>
<div class="a" style="left:1872px;top:238.5px;width:6.5px;height:2.5px;background:#8a8a8a;"></div>
<div class="a" style="left:1874.5px;top:236.5px;width:2.5px;height:8px;background:#8a8a8a;"></div>

<!-- ======= p_terminal ======= -->
<div class="a" style="left:41px;top:266px;width:1838.5px;height:40px;background:#282828;border-radius:9px 0 0 0"></div>
<div class="a" style="left:41px;top:305px;width:1839px;height:1px;background:#1c1c1d;"></div>
<div class="a" style="left:41px;top:306px;width:1838.5px;height:598px;background:#201c1f;border-radius:0 0 9px 9px;border-bottom:1px solid #141416"></div>
<div class="a" style="left:42px;top:266px;width:166.5px;height:39px;background:#272c29;border-radius:9px 9px 0 0"></div>
<div class="a" style="left:210px;top:266px;width:167px;height:39px;background:#383d3a;border-radius:9px 9px 0 0"></div>
<div class="a" style="left:210px;top:301.7px;width:167px;height:3.3px;background:#2f6fd6;"></div>
<svg class="a" style="left:56px;top:277px" width="15" height="17" viewBox="0 0 15 17" stroke="#8e8e8e" stroke-width="1.100" fill="none" stroke-linecap="round" stroke-linejoin="round"><path d="M7.500 .8l6.700 3.700v8L7.500 16.200.8 12.500v-8z"/><path d="M7.500 8.500v7.700l6.700-3.700v-8z" fill="#a0a0a0"/><path d="M.8 4.500l6.700 4"/></svg>
<div class="t" style="left:78.00px;top:277.01px;font-size:17px;color:#c8c8c8;transform:scaleX(0.9492);transform-origin:0 50%;">bash</div>
<svg class="a" style="left:224.3px;top:276.5px" width="16.2" height="18.5" viewBox="0 0 16.200 18.500"><rect x="2.900" y=".200" width="10.400" height="18.100" rx="5.200" fill="#68cc8e"/><path d="M3.600 6.200C1.600 5.400 .9 3.900.9 2.200M12.600 6.200c2-.8 2.700-2.300 2.700-4M.6 8.700h3M12.600 8.700h3M3.600 12C1.600 12.600.9 14.500.9 16.800M12.600 12c2 .6 2.700 2.500 2.700 4.800" stroke="#68cc8e" stroke-width="1.700" stroke-linecap="round" fill="none"/><circle cx="8.100" cy="5.700" r="1.300" fill="#383d3a"/></svg>
<div class="t" style="left:246.75px;top:277.01px;font-size:17px;color:#d4d4d4;transform:scaleX(0.9277);transform-origin:0 50%;">CaseTest</div>
<svg class="a" style="left:352px;top:277.5px" width="15.5" height="17" viewBox="0 0 15.5 17" stroke="#b8b8b8" stroke-width="1.600" fill="none" stroke-linecap="round" stroke-linejoin="round"><path d="M1 3.800h13.500M5.500 3.500V2A1.200 1.200 0 0 1 6.700.8h2.100A1.200 1.200 0 0 1 10 2v1.500M2.700 4l.8 10.500a1.700 1.700 0 0 0 1.700 1.500h5.100a1.700 1.700 0 0 0 1.700-1.500L12.800 4M6.300 7.200v5.500M9.200 7.200v5.500"/></svg>
<svg class="a" style="left:1636px;top:277.5px" width="15.5" height="16" viewBox="0 0 15.5 16" stroke="#b8b8b8" stroke-width="1.600" fill="none" stroke-linecap="round" stroke-linejoin="round"><rect x=".8" y=".800" width="13.900" height="14.400" rx="2"/><path d="M7.750 .8v14.400"/></svg>
<div class="t" style="left:1659.00px;top:280.63px;font-size:14.5px;color:#bdbdbd;transform:scaleX(0.9098);transform-origin:0 50%;">CaseTest</div>
<svg class="a" style="left:1730px;top:277.5px" width="15.5" height="16" viewBox="0 0 15.5 16" stroke="#b8b8b8" stroke-width="1.600" fill="none" stroke-linecap="round" stroke-linejoin="round"><rect x=".8" y=".800" width="13.900" height="14.400" rx="2"/><path d="M7.750 .8v14.400"/></svg>
<svg class="a" style="left:1756px;top:283px" width="10" height="6" viewBox="0 0 10 6" fill="#b8b8b8"><path d="M0 0h10L5 6z"/></svg>
<svg class="a" style="left:1782.5px;top:277.5px" width="15.5" height="16" viewBox="0 0 15.5 16" stroke="#b8b8b8" stroke-width="1.600" fill="none" stroke-linecap="round" stroke-linejoin="round"><rect x=".8" y=".800" width="13.900" height="14.400" rx="2"/><path d="M7.750 .8v14.400"/></svg>
<svg class="a" style="left:1814px;top:277px" width="15.5" height="17" viewBox="0 0 15.5 17" stroke="#b8b8b8" stroke-width="1.600" fill="none" stroke-linecap="round" stroke-linejoin="round"><path d="M1 3.800h13.500M5.500 3.500V2A1.200 1.200 0 0 1 6.700.8h2.100A1.200 1.200 0 0 1 10 2v1.500M2.700 4l.8 10.500a1.700 1.700 0 0 0 1.700 1.500h5.100a1.700 1.700 0 0 0 1.700-1.500L12.800 4M6.300 7.200v5.500M9.200 7.200v5.500"/></svg>
<svg class="a" style="left:1850px;top:281px" width="10" height="10" viewBox="0 0 10 10" stroke="#b8b8b8" stroke-width="1.600" fill="none" stroke-linecap="round" stroke-linejoin="round"><path d="M.7.700l8.600 8.600M9.300.7L.7 9.300"/></svg>
<div class="a" style="left:1868.8px;top:322px;width:9.6px;height:385px;background:#424243;border-radius:4.500px"></div>
<div class="a" style="left:41px;top:306px;width:1839px;height:599px;overflow:hidden"><div class="a term" style="left:25px;top:17px"><b style="color:#23d18b">developer@developer</b>:<b style="color:#3b8eea">~/Downloads/template</b>$  /usr/lib/jvm/java-17-openjdk-amd64/bin/java -Dcom.sun.management.jmxremote -Dcom.sun.management.jmxremote.port=46857 -Dcom.sun.manageme
nt.jmxremote.authenticate=false -Dcom.sun.management.jmxremote.ssl=false -cp /home/developer/Downloads/template/.jlsp/out/main:/home/developer/.m2/repository/redis/clients/jedis/
2.9.0/jedis-2.9.0.jar:/home/developer/.m2/repository/org/apache/commons/commons-pool2/2.4.2/commons-pool2-2.4.2.jar com.huaweicloud.dcs.CaseTest
<span class="w">正在为用户：</span>fea61eeemain <span class="w">处理订单</span>
<span class="w">用户：</span>fea61eeemain<span class="w">购买第</span>1<span class="w">台，剩余</span>9<span class="w">台</span>
<span class="w">正在为用户：</span>6a39facbmain <span class="w">处理订单</span>
<span class="w">用户：</span>6a39facbmain<span class="w">购买第</span>2<span class="w">台，剩余</span>8<span class="w">台</span>
<span class="w">正在为用户：</span>06456903main <span class="w">处理订单</span>
<span class="w">用户：</span>06456903main<span class="w">购买第</span>3<span class="w">台，剩余</span>7<span class="w">台</span>
<span class="w">正在为用户：</span>86b80b3fmain <span class="w">处理订单</span>
<span class="w">用户：</span>86b80b3fmain<span class="w">购买第</span>4<span class="w">台，剩余</span>6<span class="w">台</span>
<span class="w">正在为用户：</span>10d10894main <span class="w">处理订单</span>
<span class="w">用户：</span>10d10894main<span class="w">购买第</span>5<span class="w">台，剩余</span>5<span class="w">台</span>
<span class="w">正在为用户：</span>3a385248main <span class="w">处理订单</span>
<span class="w">用户：</span>3a385248main<span class="w">购买第</span>6<span class="w">台，剩余</span>4<span class="w">台</span>
<span class="w">正在为用户：</span>3829086dmain <span class="w">处理订单</span>
<span class="w">用户：</span>3829086dmain<span class="w">购买第</span>7<span class="w">台，剩余</span>3<span class="w">台</span>
<span class="w">正在为用户：</span>ea52fd2emain <span class="w">处理订单</span>
<span class="w">用户：</span>ea52fd2emain<span class="w">购买第</span>8<span class="w">台，剩余</span>2<span class="w">台</span>
<span class="w">正在为用户：</span>85216c7emain <span class="w">处理订单</span>
<span class="w">用户：</span>85216c7emain<span class="w">购买第</span>9<span class="w">台，剩余</span>1<span class="w">台</span>
<span class="w">正在为用户：</span>fac2a088main <span class="w">处理订单</span>
<span class="w">用户：</span>fac2a088main<span class="w">购买第</span>10<span class="w">台，剩余</span>0<span class="w">台</span>
<span class="w">正在为用户：</span>a7abd832main <span class="w">处理订单</span>
<span class="w">用户：</span>a7abd832main<span class="w">无法购买，已售罄！</span>
<span class="w">正在为用户：</span>a4fe4ff6main <span class="w">处理订单</span>
<span class="w">用户：</span>a4fe4ff6main<span class="w">无法购买，已售罄！</span>
<span class="w">正在为用户：</span>760f84ebmain <span class="w">处理订单</span>
<span class="w">用户：</span>760f84ebmain<span class="w">无法购买，已售罄！</span></div></div>

<!-- ======= p_side ======= -->
<div class="a" style="left:39.800px;top:176.800px;width:1840.200px;height:728px;border:1.300px solid #17181a;border-radius:10px"></div>
<div class="a" style="left:5px;top:182px;width:30.5px;height:73px;background:#1f1f21;border-radius:6px"></div>
<div class="t" style="left:19.50px;top:206.80px;font-size:14.7px;color:#e2e2e2;letter-spacing:-0.891px;transform:translate(-50%,-50%) rotate(-90deg);">工程</div>
<svg class="a" style="left:11.3px;top:229.6px" width="17" height="14.2" viewBox="0 0 17 14.2" ><path d="M0 1.500A1.500 1.500 0 0 1 1.500 0h5.200l1.600 2.300H17v2H0z" fill="#5b9cf5"/><path d="M0 4.500h17v8.300a1.400 1.400 0 0 1-1.400 1.400H1.400A1.400 1.400 0 0 1 0 12.800z" fill="#3b82f6"/><rect x="7.500" y="9.700" width="4" height="1.400" fill="#dbe8ff"/></svg>
<div class="t" style="left:19.50px;top:315.20px;font-size:14.7px;color:#a9a9a9;letter-spacing:0.012px;transform:translate(-50%,-50%) rotate(-90deg);">源代码管理</div>
<svg class="a" style="left:11.3px;top:360.5px" width="17.5" height="17" viewBox="0 0 17.5 17" ><path d="M8.750 .3l8.400 8.200-8.400 8.200L.35 8.500z" fill="#6d6d71"/><path d="M6 11.500l5.500-5.500M7 6.800h4.300" stroke="#303030" stroke-width="1.100" fill="none"/><circle cx="6" cy="11.500" r="1.100" fill="#303030"/><circle cx="11.500" cy="6" r="1.100" fill="#303030"/></svg>
<div class="t" style="left:19.50px;top:461.80px;font-size:14.7px;color:#a9a9a9;letter-spacing:0.195px;transform:translate(-50%,-50%) rotate(-90deg);">工程资源管理器</div>
<svg class="a" style="left:11.3px;top:523px" width="17.2" height="14.5" viewBox="0 0 17.2 14.5" ><path d="M0 1.500A1.500 1.500 0 0 1 1.500 0h5.200l1.600 2.300h8.900v2H0z" fill="#7d7d81"/><path d="M0 4.500h17.200v8.600a1.400 1.400 0 0 1-1.400 1.400H1.400A1.400 1.400 0 0 1 0 13.100z" fill="#6d6d71"/><rect x="7.500" y="9.900" width="4" height="1.400" fill="#d0d0d0"/></svg>
<div class="t" style="left:19.50px;top:604.30px;font-size:14.7px;color:#a9a9a9;letter-spacing:-1.500px;transform:translate(-50%,-50%) rotate(-90deg);">华为云 API</div>
<div class="a" style="left:11.6px;top:651px;width:16.5px;height:1.5px;background:#6d6d71;"></div>
<div class="a" style="left:11.6px;top:654.5px;width:16.5px;height:13.5px;background:#6d6d71;border-radius:1.500px"></div>
<div class="t" style="left:12.300px;top:657.500px;font-size:7.500px;font-weight:bold;color:#c9c9c9;letter-spacing:-0.200px">API</div>
<div class="a" style="left:13.5px;top:708px;width:2.2px;height:2.2px;background:#b8b8b8;border-radius:1px"></div>
<div class="a" style="left:19px;top:708px;width:2.2px;height:2.2px;background:#b8b8b8;border-radius:1px"></div>
<div class="a" style="left:24.5px;top:708px;width:2.2px;height:2.2px;background:#b8b8b8;border-radius:1px"></div>
<div class="t" style="left:19.20px;top:883.00px;font-size:14.7px;color:#a9a9a9;letter-spacing:-1.391px;transform:translate(-50%,-50%) rotate(-90deg);">管理</div>
<svg class="a" style="left:11px;top:905.5px" width="17" height="16.5" viewBox="0 0 17 16.5" ><path d="M16.72 7.11L16.72 9.39L14.60 9.84L13.94 11.44L15.12 13.26L13.51 14.87L11.69 13.69L10.09 14.35L9.64 16.47L7.36 16.47L6.91 14.35L5.31 13.69L3.49 14.87L1.88 13.26L3.06 11.44L2.40 9.84L0.28 9.39L0.28 7.11L2.40 6.66L3.06 5.06L1.88 3.24L3.49 1.63L5.31 2.81L6.91 2.15L7.36 0.03L9.64 0.03L10.09 2.15L11.69 2.81L13.51 1.63L15.12 3.24L13.94 5.06L14.60 6.66Z" fill="#6d6d71" stroke="#6d6d71" stroke-width="1" stroke-linejoin="round"/><circle cx="8.500" cy="8.250" r="2.400" fill="#a6a6aa"/></svg>
<svg class="a" style="left:1891.5px;top:192.8px" width="17.3" height="15.6" viewBox="0 0 17.3 15.6" ><rect x="0" y="0" width="17.300" height="4.200" rx="1" fill="#7d7d81"/><path d="M1.200 4.800h14.900v9.400a1.400 1.400 0 0 1-1.400 1.400H2.600a1.400 1.400 0 0 1-1.400-1.400z" fill="#6d6d71"/><rect x="6" y="7" width="5.300" height="1.500" fill="#c9c9c9"/></svg>
<div class="t" style="left:1901.00px;top:230.50px;font-size:14.7px;color:#bdbdbd;letter-spacing:-0.491px;transform:translate(-50%,-50%) rotate(90deg);">工具</div>
<svg class="a" style="left:1891.5px;top:279px" width="17.3" height="15.5" viewBox="0 0 17.3 15.5" ><path d="M2 5h3.300c-.8-2.800 1-4.600 2.900-4.600S12 2.200 11.200 5h2.500a1.500 1.500 0 0 1 1.500 1.500V8c1-.3 2.100.3 2.100 1.600s-1.100 1.900-2.100 1.600v2.800a1.500 1.500 0 0 1-1.500 1.500H2A1.500 1.500 0 0 1 .5 14v-2.300c1.800.5 2.900-.6 2.900-1.900S2.300 7.500.5 8V6.500A1.500 1.500 0 0 1 2 5z" fill="#6d6d71"/><rect x="7" y="4.600" width="4.500" height="1.300" fill="#bcbcbc"/></svg>
<div class="t" style="left:1901.00px;top:316.00px;font-size:14.7px;color:#bdbdbd;letter-spacing:-0.391px;transform:translate(-50%,-50%) rotate(90deg);">扩展</div>
<div class="t" style="left:1890.500px;top:362.500px;font-size:20.500px;font-weight:bold;font-style:italic;color:#6d6d71">M</div>
<div class="t" style="left:1901.00px;top:410.60px;font-size:15.5px;color:#bdbdbd;letter-spacing:-0.683px;transform:translate(-50%,-50%) rotate(90deg);">Maven</div>
<svg class="a" style="left:1891.5px;top:466.8px" width="17.3" height="17" viewBox="0 0 17.3 17" ><rect x="5.500" y="0" width="7" height="6" rx="1" fill="#6d6d71"/><rect x="0" y="10.500" width="6.500" height="6.500" rx="1" fill="#6d6d71"/><rect x="10.800" y="10.500" width="6.500" height="6.500" rx="1" fill="#6d6d71"/><path d="M9 6v2.500M3.200 10.500v-1.500a1 1 0 0 1 1-1h9.500a1 1 0 0 1 1 1v1.500" stroke="#b0b0b0" stroke-width="1.300" fill="none"/></svg>
<div class="t" style="left:1901.00px;top:535.20px;font-size:14.7px;color:#bdbdbd;letter-spacing:0.172px;transform:translate(-50%,-50%) rotate(90deg);">类型层次结构</div>
<svg class="a" style="left:1891.5px;top:613px" width="17.3" height="16.6" viewBox="0 0 17.3 16.6" ><rect x="0" y="1" width="5.500" height="5" rx="1" fill="#6d6d71"/><rect x="11.800" y="1" width="5.500" height="5" rx="1" fill="#6d6d71"/><rect x="0" y="9.500" width="5.500" height="7.100" rx="1" fill="#6d6d71"/><rect x="11.800" y="9.500" width="5.500" height="7.100" rx="1" fill="#6d6d71"/><path d="M5.500 3.500h2.200l1 1.500 1-1.500h2.100M8.700 5v4" stroke="#b0b0b0" stroke-width="1.200" fill="none"/></svg>
<div class="t" style="left:1901.00px;top:650.50px;font-size:14.7px;color:#bdbdbd;letter-spacing:-0.391px;transform:translate(-50%,-50%) rotate(90deg);">结构</div>
<div class="a" style="left:1893.7px;top:707.3px;width:2.3px;height:2.3px;background:#cdcdcd;border-radius:1px"></div>
<div class="a" style="left:1899px;top:707.3px;width:2.3px;height:2.3px;background:#cdcdcd;border-radius:1px"></div>
<div class="a" style="left:1904.3px;top:707.3px;width:2.3px;height:2.3px;background:#cdcdcd;border-radius:1px"></div>
<div class="a" style="left:1886.4px;top:752px;width:28.6px;height:2.3px;background:#3a4046;"></div>
<svg class="a" style="left:1893.5px;top:848px" width="13.5" height="17.4" viewBox="0 0 13.5 17.4" ><rect x="0" y="1.800" width="13.500" height="15.600" rx="2" fill="#6d6d71"/><path d="M3 0v3M6.750 0v3M10.500 0v3" stroke="#6d6d71" stroke-width="1.500"/><path d="M3 7h7.500M3 10h7.500M3 13h7.500" stroke="#c9c9c9" stroke-width="1.200"/></svg>
<div class="t" style="left:1901.00px;top:886.80px;font-size:14.7px;color:#bdbdbd;letter-spacing:-0.291px;transform:translate(-50%,-50%) rotate(90deg);">通知</div>
<div class="a" style="left:1888.8px;top:908.2px;width:20.4px;height:20.4px;background:#3b82f6;border-radius:50%"></div>
<div class="t" style="left:1899.20px;top:918.40px;font-size:14.5px;color:#ffffff;transform:translate(-50%,-50%) rotate(90deg);">1</div>

<!-- ======= p_bottom ======= -->
<div class="a" style="left:0px;top:944.5px;width:1920px;height:1.5px;background:#1c1c1e;"></div>
<div class="a" style="left:57.7px;top:918px;width:16.4px;height:16.4px;background:#6d6d71;border-radius:50%"></div>
<div class="a" style="left:65.1px;top:921.5px;width:1.7px;height:6.5px;background:#bdbdbd;"></div>
<div class="a" style="left:65.1px;top:929.3px;width:1.7px;height:1.7px;background:#bdbdbd;"></div>
<div class="t" style="left:80.60px;top:918.56px;font-size:14.7px;color:#c6c6c6;transform:scaleX(0.9799);transform-origin:0 50%;font-weight:500;">问题</div>
<div class="a" style="left:113px;top:917.3px;width:19.5px;height:19.5px;background:#3b82f6;border-radius:50%"></div>
<div class="t" style="left:118.80px;top:920.13px;font-size:14.5px;color:#ffffff;">5</div>
<svg class="a" style="left:165px;top:918.5px" width="13" height="14.2" viewBox="0 0 13 14.2" ><path d="M.8 0v14.200" stroke="#6d6d71" stroke-width="1.600"/><path d="M1.500 .8h11.500l-2.500 3.700 2.500 3.700H1.500z" fill="#77777b"/></svg>
<div class="t" style="left:185.00px;top:918.56px;font-size:14.7px;color:#c6c6c6;letter-spacing:0.009px;font-weight:500;">输出</div>
<svg class="a" style="left:247.8px;top:916.8px" width="16.8" height="18.5" viewBox="0 0 16.200 18.500"><rect x="2.900" y=".200" width="10.400" height="18.100" rx="5.200" fill="#6d6d71"/><path d="M3.600 6.200C1.600 5.400 .9 3.900.9 2.200M12.600 6.200c2-.8 2.700-2.300 2.700-4M.6 8.700h3M12.600 8.700h3M3.600 12C1.600 12.600.9 14.500.9 16.800M12.600 12c2 .6 2.700 2.500 2.700 4.800" stroke="#6d6d71" stroke-width="1.700" stroke-linecap="round" fill="none"/><circle cx="8.100" cy="5.700" r="1.300" fill="#a0a0a4"/></svg>
<div class="t" style="left:270.00px;top:918.56px;font-size:14.7px;color:#c6c6c6;letter-spacing:0.387px;font-weight:500;">运行和调试</div>
<svg class="a" style="left:377.5px;top:917.5px" width="17.5" height="17" viewBox="0 0 17.5 17" ><rect x="0" y="0" width="13" height="11" rx="1.500" fill="#6d6d71"/><path d="M2.500 2.800l3 2.700-3 2.700" stroke="#c4c4c4" stroke-width="1.300" fill="none"/><circle cx="13" cy="12.500" r="4" fill="#8a8a8e"/></svg>
<div class="t" style="left:400.00px;top:918.56px;font-size:14.7px;color:#c6c6c6;letter-spacing:0.137px;font-weight:500;">调试控制台</div>
<div class="a" style="left:497.5px;top:910px;width:70px;height:30px;background:#1f1f21;border-radius:6px"></div>
<svg class="a" style="left:507.5px;top:918.5px" width="16.5" height="13.5" viewBox="0 0 16.5 13.5" ><rect x="0" y="0" width="16.500" height="13.500" rx="1.800" fill="#3b82f6"/><path d="M3 3.500l3.200 3-3.200 3M8 10h4.500" stroke="#e8f0ff" stroke-width="1.400" fill="none"/></svg>
<div class="t" style="left:530.00px;top:918.56px;font-size:14.7px;color:#e6e6e6;letter-spacing:-0.391px;font-weight:500;">终端</div>
<svg class="a" style="left:593.5px;top:917.5px" width="14" height="16.5" viewBox="0 0 14 16.5" ><path d="M4 0h6v1.500H9.200V6l4.500 8.500a1.300 1.300 0 0 1-1.200 2H1.500a1.300 1.300 0 0 1-1.200-2L4.800 6V1.500H4z" fill="#6d6d71"/><path d="M3.300 11.500h7.400" stroke="#b8b8b8" stroke-width="1.200"/></svg>
<div class="t" style="left:615.00px;top:918.56px;font-size:14.7px;color:#c6c6c6;letter-spacing:0.609px;font-weight:500;">测试</div>
<svg class="a" style="left:677.5px;top:918px" width="17.5" height="17" viewBox="0 0 17.5 17" ><circle cx="7.200" cy="7.200" r="6.500" fill="#6d6d71"/><path d="M11.800 11.800l4.700 4.700" stroke="#6d6d71" stroke-width="2.600" stroke-linecap="round"/></svg>
<div class="t" style="left:700.00px;top:918.56px;font-size:14.7px;color:#c6c6c6;letter-spacing:0.078px;font-weight:500;">查找引用</div>
<div class="a" style="left:792.5px;top:917.5px;width:17.5px;height:17.5px;background:#6d6d71;border-radius:50%"></div>
<svg class="a" style="left:792.5px;top:917.5px" width="17.5" height="17.5" viewBox="0 0 17.5 17.5" ><path d="M4.500 11l5-5 1.700 1.700-5 5zM8.500 4.500c2-1.200 4-.5 5 1l-1.300.9c-.8-.9-1.800-1.100-2.800-.6zM10.500 8.200l1.300-1.300 2.700 4-1.300 1.300z" fill="#c9c9c9"/></svg>
<div class="t" style="left:815.00px;top:918.56px;font-size:14.7px;color:#c6c6c6;letter-spacing:0.609px;font-weight:500;">构建</div>
<div class="a" style="left:879.5px;top:924px;width:2.3px;height:2.3px;background:#b8b8b8;border-radius:1px"></div>
<div class="a" style="left:885.2px;top:924px;width:2.3px;height:2.3px;background:#b8b8b8;border-radius:1px"></div>
<div class="a" style="left:890.9px;top:924px;width:2.3px;height:2.3px;background:#b8b8b8;border-radius:1px"></div>
<div class="a" style="left:1780.3px;top:917px;width:17px;height:17px;background:#6d6d71;border-radius:50%"></div>
<svg class="a" style="left:1780.3px;top:917px" width="17" height="17" viewBox="0 0 17 17" ><path d="M6 4.500v8M6 8.500h3.500a1.500 1.500 0 0 1 1.500 1.500v1" stroke="#b4b4b4" stroke-width="1.200" fill="none"/><circle cx="6" cy="4.500" r="1.600" fill="#b4b4b4"/><circle cx="6" cy="12.500" r="1.600" fill="#b4b4b4"/><circle cx="11" cy="11.500" r="1.600" fill="#b4b4b4"/></svg>
<div class="t" style="left:1803.00px;top:918.86px;font-size:16px;color:#c6c6c6;transform:scaleX(0.9227);transform-origin:0 50%;">Git Graph</div>
<div class="a" style="left:0px;top:946px;width:1920px;height:32px;background:#2f2f2f;"></div>
<div class="a" style="left:7px;top:954.7px;width:15.6px;height:15.6px;background:#f06b6b;border-radius:50%"></div>
<svg class="a" style="left:7px;top:954.7px" width="15.6" height="15.6" viewBox="0 0 15.6 15.6" ><path d="M4.600 4.600l6.400 6.400M11 4.600l-6.400 6.400" stroke="#2f2f2f" stroke-width="1.500"/></svg>
<div class="t" style="left:27.60px;top:955.16px;font-size:16px;color:#c6c6c6;transform:scaleX(0.8533);transform-origin:0 50%;">0</div>
<svg class="a" style="left:40.2px;top:954.5px" width="15" height="15" viewBox="0 0 15 15" ><path d="M7.500 .6L14.700 14a.5.500 0 0 1-.4.800H.7a.5.500 0 0 1-.4-.8z" fill="#f59e2b"/><rect x="6.700" y="5" width="1.700" height="5.500" fill="#2f2f2f"/><rect x="6.700" y="11.500" width="1.700" height="1.700" fill="#2f2f2f"/></svg>
<div class="t" style="left:60.20px;top:955.16px;font-size:16px;color:#c6c6c6;transform:scaleX(0.8309);transform-origin:0 50%;">3</div>
<div class="a" style="left:72.3px;top:954.7px;width:15.6px;height:15.6px;background:#3b82f6;border-radius:50%"></div>
<div class="a" style="left:79.3px;top:961.3px;width:1.7px;height:6px;background:#e8f0ff;"></div>
<div class="a" style="left:79.3px;top:958px;width:1.7px;height:1.8px;background:#e8f0ff;"></div>
<div class="t" style="left:92.80px;top:955.16px;font-size:16px;color:#c6c6c6;transform:scaleX(0.8309);transform-origin:0 50%;">2</div>
<svg class="a" style="left:117.3px;top:954.7px" width="16.5" height="15" viewBox="0 0 16.5 15" ><rect x="1" y="8" width="7.500" height="6.500" rx="1" fill="none" stroke="#c0c0c0" stroke-width="1.300"/><path d="M2.800 8V6.500a2 2 0 0 1 4 0" fill="none" stroke="#c0c0c0" stroke-width="1.300"/><path d="M6 1.500l5 3.500-2.500 3M10.500 1l5.300 3.800-3.300 3.700" fill="none" stroke="#c0c0c0" stroke-width="1.300" stroke-linejoin="round"/></svg>
<div class="t" style="left:138.50px;top:955.16px;font-size:16px;color:#c6c6c6;letter-spacing:-0.371px;">CaseTest (template)</div>
<div class="t" style="left:1636.00px;top:955.40px;font-size:15px;color:#c6c6c6;letter-spacing:-0.339px;">行 7，列 22</div>
<div class="t" style="left:1729.00px;top:955.40px;font-size:15px;color:#c6c6c6;letter-spacing:-0.422px;">空格: 4</div>
<div class="t" style="left:1791.00px;top:955.40px;font-size:15px;color:#c6c6c6;letter-spacing:-0.250px;">UTF-8</div>
<div class="t" style="left:1849.00px;top:955.40px;font-size:15px;color:#c6c6c6;transform:scaleX(0.9135);transform-origin:0 50%;">LF</div>
<div class="t" style="left:1881.50px;top:955.40px;font-size:15px;color:#c6c6c6;letter-spacing:-0.062px;">Java</div>
<div class="a" style="left:0px;top:977.5px;width:1920px;height:38px;background:#2f3a45;"></div>
<div class="a" style="left:595px;top:977.5px;width:1000px;height:38px;background:linear-gradient(#434343,#3d3d3d 50%,#373737);"></div>
<div class="a" style="left:1595px;top:977.5px;width:325px;height:38px;background:linear-gradient(100deg,#2a2f42 0%,#3e4349 22%,#42464a 50%,#363b46 72%,#262d4a 100%);"></div>
<div class="a" style="left:0px;top:977.5px;width:1920px;height:1.5px;background:#1e2024;"></div>
<svg class="a" style="left:4px;top:983.5px" width="25" height="27" viewBox="0 0 25 27" ><defs><linearGradient id="xg" x1="0" y1="0" x2="0" y2="1"><stop offset="0" stop-color="#9fe3f7"/><stop offset="1" stop-color="#1487bd"/></linearGradient></defs><path d="M0 3.500L4.500 0l8 9.500L20.500 0 25 3.500l-8.800 10L25 23.500 20.500 27l-8-9.500-8 9.500L0 23.500l8.800-10z" fill="url(#xg)"/></svg>
<div class="t" style="left:35.30px;top:991.69px;font-size:16.2px;color:#ececec;letter-spacing:-0.025px;text-shadow:0 1px 1px #111;">所有应用程序</div>
<div class="a" style="left:139.5px;top:984px;width:2px;height:27px;background:#848e97;"></div>
<div class="a" style="left:186.5px;top:984px;width:2px;height:27px;background:#848e97;"></div>
<div class="a" style="left:233.5px;top:984px;width:2px;height:27px;background:#848e97;"></div>
<div class="a" style="left:282.3px;top:984px;width:2px;height:27px;background:#848e97;"></div>
<div class="a" style="left:329.3px;top:984px;width:2px;height:27px;background:#848e97;"></div>
<div class="a" style="left:150.3px;top:988px;width:26.7px;height:3px;background:#5f6870;"></div>
<div class="a" style="left:150.3px;top:991.5px;width:26.7px;height:17px;background:linear-gradient(#9adcf5,#6cc4ea);"></div>
<div class="a" style="left:155px;top:1005px;width:3px;height:1.5px;background:#2f3b47;"></div>
<div class="a" style="left:159.8px;top:1005px;width:3px;height:1.5px;background:#2f3b47;"></div>
<div class="a" style="left:164.6px;top:1005px;width:3px;height:1.5px;background:#2f3b47;"></div>
<div class="a" style="left:169.4px;top:1005px;width:3px;height:1.5px;background:#2f3b47;"></div>
<div class="a" style="left:150.3px;top:1007px;width:26.7px;height:1.5px;background:#4f7f9a;"></div>
<div class="a" style="left:199px;top:984.5px;width:24px;height:24px;background:#0c0c0c;border:1.500px solid #5a5f63;border-radius:2px"></div>
<div class="t" style="left:202.500px;top:987.500px;font-size:9px;font-weight:bold;color:#f2f2f2;font-family:'DejaVu Sans Mono',monospace">$_</div>
<svg class="a" style="left:246px;top:986px" width="26" height="21.5" viewBox="0 0 26 21.5" ><path d="M0 2A1.500 1.500 0 0 1 1.500 .5h7l2 2.300h14A1.500 1.500 0 0 1 26 4.300V20a1.500 1.500 0 0 1-1.500 1.500h-23A1.500 1.500 0 0 1 0 20z" fill="#b9b9b9"/><path d="M0 5.500h26V20a1.500 1.500 0 0 1-1.500 1.500h-23A1.500 1.500 0 0 1 0 20z" fill="#dcdcdc"/><path d="M13 9.500l4.500 4h-1.500v3.500h-6v-3.500H8.500z" fill="#a9a9a9"/></svg>
<svg class="a" style="left:293.7px;top:983.7px" width="26.5" height="26.5" viewBox="0 0 26.5 26.5" ><defs><radialGradient id="gg" cx=".4" cy=".35" r=".7"><stop offset="0" stop-color="#5b9be0"/><stop offset="1" stop-color="#173f7f"/></radialGradient></defs><circle cx="12" cy="12" r="11.500" fill="url(#gg)"/><path d="M5 6c2-1 4 0 5 1.500s0 3-1.500 3.500-2 2.500-1 4-1 2.500-2.500 1S2 11 3 8.500zM14 3c2 0 4 1.500 5 3s-1 2-2.500 1.500S13 5 14 3zM15 12c1.500-.5 3 .5 3.500 2s-.5 3.500-2 4-2.500-1-2.500-2.500.1-3.100 1-3.500z" fill="#0f2c5c" opacity=".75"/><path d="M14.500 11.500l.3 13 3.200-3 2.200 4.800 2-.9-2.200-4.700 4.400-.2z" fill="#e9e9e9" stroke="#3a3a3a" stroke-width=".8"/></svg>
<div class="a" style="left:338px;top:992px;width:4px;height:1.3px;background:#9aa3ab;"></div>
<div class="a" style="left:338px;top:997px;width:4px;height:1.3px;background:#9aa3ab;"></div>
<div class="a" style="left:338px;top:1002px;width:4px;height:1.3px;background:#9aa3ab;"></div>
<div class="a" style="left:345.5px;top:978.8px;width:249.5px;height:36.2px;background:linear-gradient(#2e5c92,#264f80);border-radius:4px;border:1px solid #1f3f66"></div>
<svg class="a" style="left:349.5px;top:985.5px" width="22" height="23" viewBox="0 0 22 23"><defs><linearGradient id="lgb" x1="0" y1="0" x2="1" y2="1"><stop offset="0" stop-color="#f2f5f7"/><stop offset="1" stop-color="#9aa6b0"/></linearGradient></defs><path fill-rule="evenodd" fill="url(#lgb)" d="M9.500 4.400a7.600 7.600 0 1 0 0 15.200a7.600 7.600 0 1 0 0-15.200zM11.800 7.600a4.700 4.700 0 1 1 0 9.400a4.700 4.700 0 1 1 0-9.400z"/><path fill="#ee5468" d="M1.700 10.500C2.300 6.300 6 3.600 10.200 4.200l1.200-2.700 5.700 7.400-5.300.4.600-2.400C8.300 6.200 4.800 7.800 3.900 11z"/><rect x="5.700" y="15.500" width="14.200" height="6.300" fill="#e8323c"/><text x="12.800" y="20.600" font-size="5" font-weight="bold" fill="#fff" text-anchor="middle" font-family="Liberation Sans,sans-serif">JAVA</text></svg>
<div class="t" style="left:380.50px;top:990.51px;font-size:17px;color:#ffffff;letter-spacing:-0.011px;">template - CaseTest.java ···</div>
<svg class="a" style="left:598.7px;top:986px" width="20" height="21.5" viewBox="0 0 20 21.5" ><defs><linearGradient id="fx" x1="0" y1="0" x2="0" y2="1"><stop offset="0" stop-color="#ffbd2e"/><stop offset=".5" stop-color="#ff7a16"/><stop offset="1" stop-color="#e31587"/></linearGradient></defs><path d="M10 2.500c1-1.500 2.500-2.300 3-2.500-.3 1.500.5 3 2 4.500 2.500 1.500 5 4 5 8a10 10 0 0 1-20 0c0-3 1-5.500 3-7 0 1 .3 2 1 2.500C5 6 7 3.500 10 2.500z" fill="url(#fx)"/><circle cx="10" cy="12.500" r="5" fill="#7542e5"/><path d="M5 10c1.500-2 5-2.500 7-1-2 0-3.500 1-3.500 2.500s1.500 3 3.500 3c-3 1.500-6.500.5-7.500-2z" fill="#ff9a1f"/></svg>
<div class="t" style="left:630.50px;top:991.01px;font-size:17px;color:#b4b4b4;letter-spacing:-0.014px;">Codelabs — Mozilla Firefox</div>
<div class="a" style="left:849.5px;top:988px;width:18.5px;height:18.5px;background:radial-gradient(circle at 50% 35%,#8fd14f,#4a9a23);border-radius:50%"></div>
<svg class="a" style="left:849.5px;top:988px" width="18.5" height="18.5" viewBox="0 0 18.5 18.5" ><path d="M7.500 4h3.500v5h3l-4.750 5L4.500 9h3z" fill="#f2f8ec"/></svg>
<div class="t" style="left:880.50px;top:991.01px;font-size:17px;color:#b4b4b4;letter-spacing:0.361px;">Downloads</div>
<div class="a" style="left:1100px;top:988px;width:17.5px;height:17px;background:#2f2f2f;border:1.500px solid #8d8d8d;border-radius:2px"></div>
<div class="a" style="left:1103px;top:991.5px;width:3px;height:1.2px;background:#cfcfcf;"></div>
<div class="a" style="left:1350px;top:988px;width:17.5px;height:17px;background:#2f2f2f;border:1.500px solid #8d8d8d;border-radius:2px"></div>
<div class="a" style="left:1353px;top:991.5px;width:3px;height:1.2px;background:#cfcfcf;"></div>
<div class="t" style="left:1130.70px;top:991.01px;font-size:17px;color:#a2a2a2;letter-spacing:0.168px;">developer@developer: /</div>
<div class="t" style="left:1380.70px;top:991.01px;font-size:17px;color:#a2a2a2;letter-spacing:0.168px;">developer@developer: /</div>
<div class="a" style="left:38.8px;top:757.3px;width:432.700px;height:150.600px;border:5.600px solid #ff5066;border-radius:6.500px"></div>
</body>
</html>
